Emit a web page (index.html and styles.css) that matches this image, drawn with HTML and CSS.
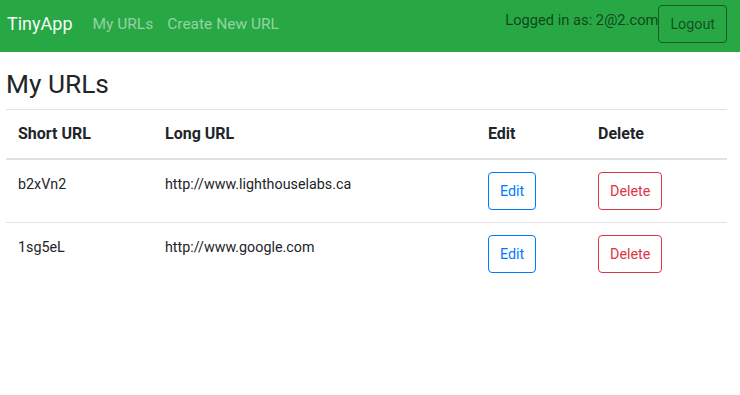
FILE: index.html
```html
<!DOCTYPE html>
<html lang="en">
<head>
<meta charset="utf-8">
<title>TinyApp</title>
<link rel="stylesheet" href="styles.css">
</head>
<body>
<nav class="navbar">
  <a class="brand" href="#">TinyApp</a>
  <div class="nav-links">
    <a class="nav-link" href="#">My URLs</a>
    <a class="nav-link" href="#">Create New URL</a>
  </div>
  <div class="nav-right">
    <span class="navbar-text">Logged in as: 2@2.com</span>
    <button class="btn btn-logout" type="button">Logout</button>
  </div>
</nav>
<main class="content">
  <h3 class="title">My URLs</h3>
  <table class="table">
    <colgroup>
      <col class="c1"><col class="c2"><col class="c3"><col class="c4">
    </colgroup>
    <thead>
      <tr><th>Short URL</th><th>Long URL</th><th>Edit</th><th>Delete</th></tr>
    </thead>
    <tbody>
      <tr>
        <td>b2xVn2</td>
        <td>http://www.lighthouselabs.ca</td>
        <td><button class="btn btn-edit" type="button">Edit</button></td>
        <td><button class="btn btn-delete" type="button">Delete</button></td>
      </tr>
      <tr>
        <td>1sg5eL</td>
        <td>http://www.google.com</td>
        <td><button class="btn btn-edit" type="button">Edit</button></td>
        <td><button class="btn btn-delete" type="button">Delete</button></td>
      </tr>
    </tbody>
  </table>
</main>
</body>
</html>
```
FILE: styles.css
```css
* { box-sizing: border-box; }
html, body { margin: 0; padding: 0; }
body {
  font-family: Roboto, "Liberation Sans", Arial, sans-serif;
  font-size: 16px;
  line-height: 1.5;
  color: #212529;
  background: #fff;
}
.navbar {
  display: flex;
  align-items: center;
  height: 52px;
  padding: 5px 13px 9px 7px;
  background: #28a745;
}
.brand {
  font-size: 18px;
  line-height: 30px;
  color: #f3fbf4;
  text-decoration: none;
  margin-right: 20px;
}
.nav-links {
  display: flex;
  gap: 14px;
}
.nav-link {
  font-size: 15.5px;
  color: rgba(255,255,255,.5);
  text-decoration: none;
  line-height: 24px;
}
.nav-right {
  margin-left: auto;
  display: flex;
  align-items: flex-start;
  height: 38px;
}
.navbar-text {
  font-size: 14.7px;
  color: rgba(0,0,0,.6);
  line-height: 24px;
  margin-top: 3px;
}
.btn {
  font-family: inherit;
  font-size: 14.3px;
  line-height: 24px;
  padding: 6px 11px;
  background: transparent;
  border: 1px solid;
  border-radius: 4px;
  cursor: pointer;
}
.btn-logout {
  color: rgba(0,0,0,.55);
  border-color: rgba(0,0,0,.45);
}
.btn-edit {
  color: #007bff;
  border-color: #007bff;
}
.btn-delete {
  color: #dc3545;
  border-color: #dc3545;
}
.content {
  padding: 0 13px 0 6px;
}
.title {
  font-size: 26.3px;
  font-weight: 400;
  line-height: 1.25;
  margin: 16px 0 8px 0;
}
.table {
  width: 100%;
  border-collapse: collapse;
  table-layout: fixed;
}
.c1 { width: 147px; }
.c2 { width: 323px; }
.c3 { width: 110px; }
.c4 { width: 141px; }
.table th, .table td {
  padding: 12px;
  text-align: left;
  vertical-align: top;
  border-top: 1px solid #dee2e6;
}
.table th { font-weight: 700; font-size: 16px; line-height: 24px; }
.table td { font-size: 14.3px; line-height: 24px; }
.table thead th {
  border-bottom: 2px solid #dee2e6;
}
.table thead + tbody tr:first-child td { border-top: 0; }
```
